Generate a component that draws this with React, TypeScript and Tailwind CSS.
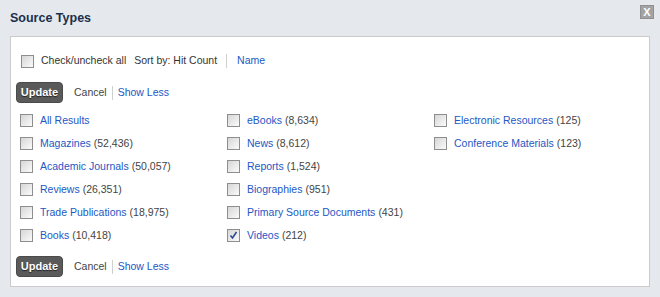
import React from "react";

const font = { fontFamily: '"Liberation Sans", Arial, sans-serif' };

function Box({ checked = false }: { checked?: boolean }) {
  return (
    <span className="relative inline-block w-[13px] h-[13px] shrink-0 border border-[#8e8e8e] bg-gradient-to-br from-[#d6d6d6] to-[#fbfbfb]">
      {checked && (
        <svg className="absolute left-[1px] top-[1px]" width="9" height="9" viewBox="0 0 9 9">
          <path d="M1.5 4.5 L3.5 7 L7.5 1" fill="none" stroke="#2c4a9a" strokeWidth="1.6" />
        </svg>
      )}
    </span>
  );
}

type Item = { name: string; count?: string; checked?: boolean };

const cols: Item[][] = [
  [
    { name: "All Results" },
    { name: "Magazines", count: "(52,436)" },
    { name: "Academic Journals", count: "(50,057)" },
    { name: "Reviews", count: "(26,351)" },
    { name: "Trade Publications", count: "(18,975)" },
    { name: "Books", count: "(10,418)" },
  ],
  [
    { name: "eBooks", count: "(8,634)" },
    { name: "News", count: "(8,612)" },
    { name: "Reports", count: "(1,524)" },
    { name: "Biographies", count: "(951)" },
    { name: "Primary Source Documents", count: "(431)" },
    { name: "Videos", count: "(212)", checked: true },
  ],
  [
    { name: "Electronic Resources", count: "(125)" },
    { name: "Conference Materials", count: "(123)" },
  ],
];

function Actions() {
  return (
    <div className="flex items-center h-[21px] pl-[5px]">
      <button className="h-[21px] w-[47px] rounded-[4px] bg-[#5a5a5a] border border-[#4a4a4a] text-white font-bold text-[11px] [text-shadow:0_1px_1px_#222]">
        Update
      </button>
      <span className="ml-[11px] text-[#444]">Cancel</span>
      <span className="ml-[5px] w-px h-[14px] bg-[#cfcfcf]" />
      <span className="ml-[5px] text-[#2358c4]">Show Less</span>
    </div>
  );
}

export default function App() {
  return (
    <div style={font} className="w-[660px] h-[297px] bg-[#e5e9ee] text-[10.5px] text-[#333] overflow-hidden">
      <div className="h-[36px] flex justify-between pl-[10px] pr-[6px]">
        <div className="pt-[10px] text-[12.5px] leading-[16px] font-bold text-[#1b2f4d]">Source Types</div>
        <div className="mt-[5px] w-[14px] h-[14px] bg-[#a3a3a3] border border-[#909090] flex items-center justify-center text-white font-bold text-[11px] leading-none">
          X
        </div>
      </div>
      <div className="mx-[10px] h-[251px] bg-white border border-[#cbcbcb] flex flex-col">
        <div className="flex items-center h-[20px] mt-[14px] pl-[10px]">
          <Box />
          <span className="ml-[7px]">Check/uncheck all</span>
          <span className="ml-[8px]">Sort by: Hit Count</span>
          <span className="ml-[9px] w-px h-[14px] bg-[#cfcfcf]" />
          <span className="ml-[10px] text-[#2358c4]">Name</span>
        </div>
        <div className="mt-[11px]">
          <Actions />
        </div>
        <div className="mt-[6px] pl-[9px] grid grid-cols-[207px_207px_207px]">
          {cols.map((c, i) => (
            <div key={i} className="flex flex-col">
              {c.map((it) => (
                <div key={it.name} className="flex items-center h-[23px]">
                  <Box checked={it.checked} />
                  <span className="ml-[7px] text-[#2358c4]">{it.name}</span>
                  {it.count && <span className="ml-[3px] text-[#444]">{it.count}</span>}
                </div>
              ))}
            </div>
          ))}
        </div>
        <div className="mt-[9px]">
          <Actions />
        </div>
      </div>
    </div>
  );
}
